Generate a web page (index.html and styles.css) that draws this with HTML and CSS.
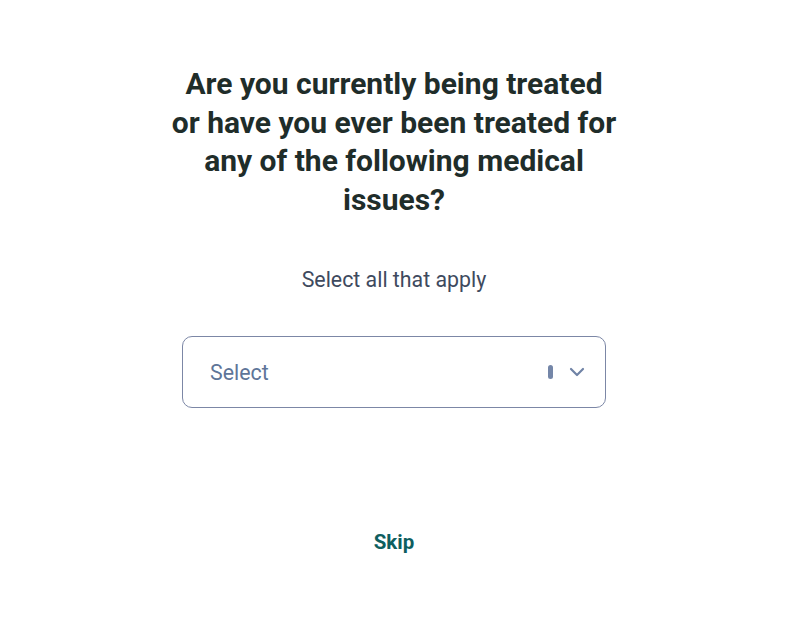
FILE: index.html
```html
<!DOCTYPE html>
<html>
<head>
<meta charset="utf-8">
<link rel="stylesheet" href="styles.css">
</head>
<body>
<main class="page">
  <h1 class="title">Are you currently being treated or have you ever been treated for any of the following medical issues?</h1>
  <p class="subtitle">Select all that apply</p>
  <div class="select">
    <span class="select-placeholder">Select</span>
    <span class="select-indicators">
      <span class="select-sep"></span>
      <svg class="select-chevron" width="16" height="10" viewBox="0 0 16 10"><path d="M2 2l6 6 6-6" fill="none" stroke="#7083a6" stroke-width="2.2" stroke-linecap="round" stroke-linejoin="round"/></svg>
    </span>
  </div>
  <button class="skip">Skip</button>
</main>
</body>
</html>
```
FILE: styles.css
```css
html, body {
  margin: 0;
  padding: 0;
  background: #ffffff;
}
body {
  font-family: Roboto, "Noto Sans", sans-serif;
}
.page {
  display: flex;
  flex-direction: column;
  align-items: center;
  padding-top: 65px;
  padding-right: 12px;
}
.title {
  margin: 0;
  width: 448px;
  text-align: center;
  font-size: 30px;
  font-weight: 700;
  line-height: 38.5px;
  color: #1f2d2a;
}
.subtitle {
  margin: 47px 0 0;
  font-size: 21.33px;
  line-height: 28px;
  color: #3e4a5e;
}
.select {
  margin-top: 42px;
  box-sizing: border-box;
  width: 424px;
  height: 72px;
  border: 1px solid #7c87a6;
  border-radius: 10px;
  display: flex;
  align-items: center;
  justify-content: space-between;
  padding: 0 20px 0 27px;
}
.select-placeholder {
  font-size: 21.33px;
  color: #5e7598;
}
.select-indicators {
  display: flex;
  align-items: center;
  gap: 16px;
}
.select-sep {
  width: 5px;
  height: 14px;
  border-radius: 3px;
  background: #7486a8;
}
.select-chevron {
  display: block;
}
.skip {
  margin-top: 120px;
  border: 0;
  background: none;
  padding: 0;
  font-family: Roboto, "Noto Sans", sans-serif;
  font-size: 20.5px;
  font-weight: 700;
  line-height: 28px;
  color: #0e5e5f;
}
```
